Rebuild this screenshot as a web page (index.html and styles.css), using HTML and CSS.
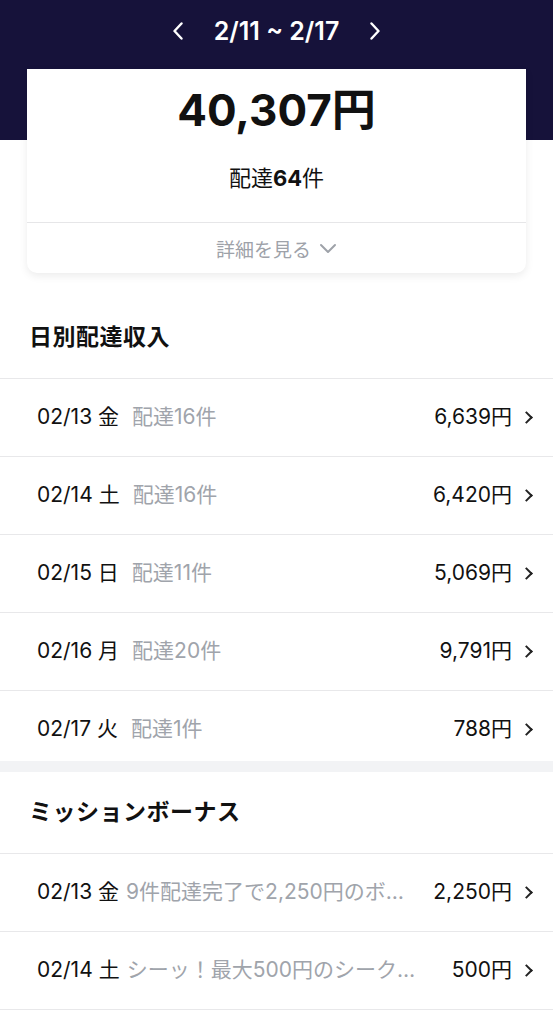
FILE: index.html
```html
<!DOCTYPE html>
<html lang="ja">
<head>
    <meta charset="UTF-8">
    <meta name="viewport" content="width=device-width, initial-scale=1.0">
    <title>配達収入</title>
    <link rel="stylesheet" href="styles.css">
</head>
<body>
    <div class="header">
        <div class="week-nav">
            <svg class="nav-arrow" width="12" height="18" viewBox="0 0 12 18"><path d="M9.5 1.5 L2.5 9 L9.5 16.5" fill="none" stroke="#fff" stroke-width="2.4" stroke-linecap="round" stroke-linejoin="round"/></svg>
            <span class="week-label">2/11 ~ 2/17</span>
            <svg class="nav-arrow" width="12" height="18" viewBox="0 0 12 18"><path d="M2.5 1.5 L9.5 9 L2.5 16.5" fill="none" stroke="#fff" stroke-width="2.4" stroke-linecap="round" stroke-linejoin="round"/></svg>
        </div>
    </div>

    <div class="summary">
        <div class="total">40,307円</div>
        <div class="count">配達<b>64</b>件</div>
        <div class="detail">
            詳細を見る
            <svg width="18" height="12" viewBox="0 0 18 12"><path d="M2 3 L9 10 L16 3" fill="none" stroke="#9ea2a9" stroke-width="2" stroke-linecap="round" stroke-linejoin="round"/></svg>
        </div>
    </div>

    <h2 class="section-title first">日別配達収入</h2>
    <ul class="list daily">
        <li class="row"><span class="date">02/13 金</span><span class="desc">配達16件</span><span class="amount">6,639円</span><i class="chev"></i></li>
        <li class="row"><span class="date">02/14 土</span><span class="desc">配達16件</span><span class="amount">6,420円</span><i class="chev"></i></li>
        <li class="row"><span class="date">02/15 日</span><span class="desc">配達11件</span><span class="amount">5,069円</span><i class="chev"></i></li>
        <li class="row"><span class="date">02/16 月</span><span class="desc">配達20件</span><span class="amount">9,791円</span><i class="chev"></i></li>
        <li class="row"><span class="date">02/17 火</span><span class="desc">配達1件</span><span class="amount">788円</span><i class="chev"></i></li>
    </ul>

    <div class="band"></div>

    <h2 class="section-title">ミッションボーナス</h2>
    <ul class="list bonus">
        <li class="row"><span class="date">02/13 金</span><span class="desc">9件配達完了で2,250円のボ…</span><span class="amount">2,250円</span><i class="chev"></i></li>
        <li class="row"><span class="date">02/14 土</span><span class="desc">シーッ！最大500円のシーク…</span><span class="amount">500円</span><i class="chev"></i></li>
    </ul>
</body>
</html>
```

FILE: styles.css
```css
/* Basic reset */
* {
    box-sizing: border-box;
    margin: 0;
    padding: 0;
}

body {
    font-family: Inter, "Noto Sans CJK JP", sans-serif;
    background-color: #fff;
    color: #111;
}

.header {
    background-color: #16123a;
    height: 140px;
}

.week-nav {
    height: 62px;
    display: flex;
    align-items: center;
    justify-content: center;
    gap: 30px;
    color: #fff;
}

.week-label {
    font-size: 25px;
    font-weight: 600;
}

.summary {
    margin: -71px 27px 0;
    background-color: #fff;
    border-radius: 0 0 10px 10px;
    box-shadow: 0 3px 8px rgba(0, 0, 0, 0.08);
    text-align: center;
}

.total {
    padding-top: 14px;
    font-size: 44px;
    font-weight: 700;
    line-height: 54px;
}

.count {
    margin-top: 26px;
    padding-bottom: 29px;
    font-size: 22px;
    line-height: 30px;
    border-bottom: 1px solid #e6e6e8;
}

.count b {
    font-weight: 700;
}

.detail {
    height: 50px;
    display: flex;
    align-items: center;
    justify-content: center;
    gap: 8px;
    font-size: 19px;
    color: #9ea2a9;
}

.section-title {
    padding: 25px 29px 26px;
    font-size: 23px;
    font-weight: 700;
    line-height: 30px;
    letter-spacing: 0.5px;
}

.section-title.first {
    padding-top: 49px;
}

.list {
    list-style: none;
}

.row {
    display: flex;
    align-items: center;
    padding: 24px 18px 25px 37px;
    border-top: 1px solid #e8e8ea;
    font-size: 21px;
    line-height: 28px;
    white-space: nowrap;
}

.daily .row:last-child {
    padding-bottom: 18px;
}

.bonus .row:last-child {
    border-bottom: 1px solid #e8e8ea;
}

.desc {
    margin-left: 13px;
    margin-right: 12px;
    color: #a0a4ab;
}

.bonus .desc {
    margin-left: 7px;
}

.amount {
    margin-left: auto;
}

.chev {
    width: 9px;
    height: 9px;
    margin-left: 10px;
    margin-right: 4px;
    border-top: 2px solid #222;
    border-right: 2px solid #222;
    transform: rotate(45deg);
}

.band {
    height: 11px;
    background-color: #f2f3f5;
}
```
